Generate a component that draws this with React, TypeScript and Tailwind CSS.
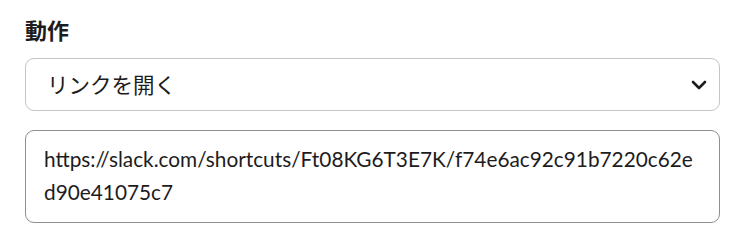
import { ChevronDown } from 'lucide-react';

const font = { fontFamily: 'Lato, "Noto Sans CJK JP", sans-serif' };

const ActionField = () => {
  return (
    <div className="pl-[25px] pr-[13px] pt-[16px] text-[#1d1c1d]" style={font}>
      <label className="block text-[22px] leading-[30px] font-bold">動作</label>
      <div className="mt-[12px] flex h-[53px] items-center justify-between rounded-[9px] border border-[#c4c4c4] bg-white pl-[21px] pr-[8px]">
        <span className="text-[21.5px] leading-[30px]">リンクを開く</span>
        <ChevronDown className="h-[24px] w-[24px] text-[#1d1c1d]" strokeWidth={2.6} />
      </div>
      <div className="mt-[19px] h-[93px] rounded-[9px] border border-[#8f8f8f] bg-white pl-[18px] pr-[19px] pt-[11px] text-[20.8px] leading-[33px] break-all">
        https://slack.com/shortcuts/Ft08KG6T3E7K/f74e6ac92c91b7220c62ed90e41075c7
      </div>
    </div>
  );
};

export default function App() {
  return (
    <div className="h-[241px] w-[733px] bg-white">
      <ActionField />
    </div>
  );
}
